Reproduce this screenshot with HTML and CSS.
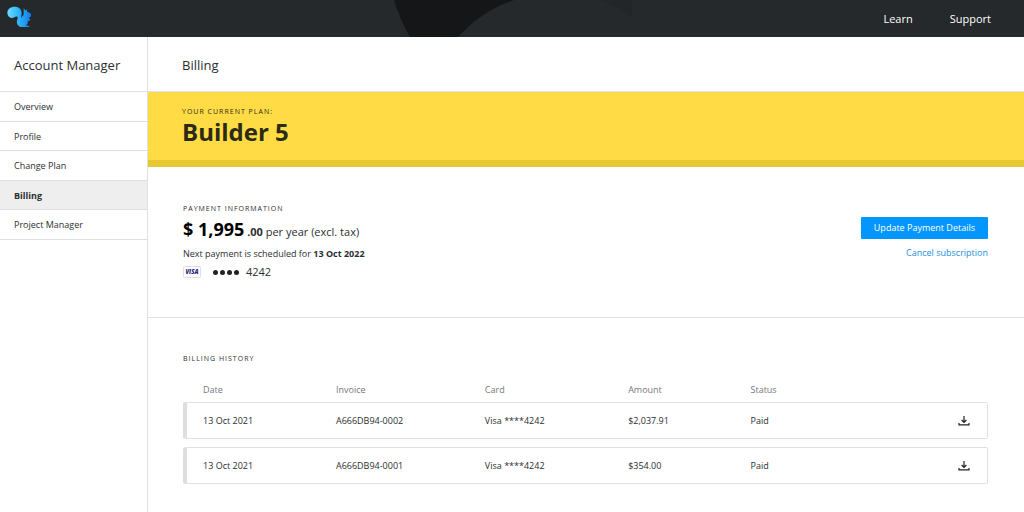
FILE: index.html
```html
<!DOCTYPE html>
<html lang="en">

<head>
    <meta charset="UTF-8">
    <meta name="viewport" content="width=device-width, initial-scale=1.0">
    <title>Billing - Account Manager</title>
    <link rel="stylesheet" href="styles.css">
</head>
<body>
    <!-- top bar -->
    <header class="topbar">
        <svg class="topbar-bg" viewBox="0 0 1024 37" preserveAspectRatio="none" aria-hidden="true">
            <path d="M394 0 H514 Q481 11 458 37 H410 Q401 22 394 0Z" fill="#141618"/>
            <path d="M600 0 Q620 8 632 18 V0 Z" fill="#222628"/>
        </svg>
        <a class="logo" href="#" aria-label="Home">
            <svg viewBox="0 0 72 63" width="24" height="21">
                <defs>
                    <linearGradient id="logo-fill" x1="0" y1="0" x2="1" y2="0">
                        <stop offset="0" stop-color="#6adcff"/>
                        <stop offset="0.5" stop-color="#2bb2fb"/>
                        <stop offset="1" stop-color="#127ce8"/>
                    </linearGradient>
                </defs>
                <path d="M1 21C1 8 12 2 23 2C36 2 44 10 44 22C44 28 42 32 42 37C44 32 48 29 50 26V7L56 14L59 9L61 18C68 18 74 24 72 30C71 34 66 35 64 36L70 40L68 45L62 44C64 52 60 56 56 58L67 60V63H46C34 63 28 54 30 44C31 39 34 35 31 32C28 30 25 32 22 34C14 39 2 34 1 21Z" fill="url(#logo-fill)"/>
            </svg>
        </a>
        <nav class="topbar-nav">
            <a href="#">Learn</a>
            <a href="#">Support</a>
        </nav>
    </header>

    <div class="layout">
        <!-- left menu -->
        <aside class="sidebar">
            <h2 class="sidebar-title">Account Manager</h2>
            <ul class="menu">
                <li><a href="#">Overview</a></li>
                <li><a href="#">Profile</a></li>
                <li><a href="#">Change Plan</a></li>
                <li class="active"><a href="#">Billing</a></li>
                <li><a href="#">Project Manager</a></li>
            </ul>
        </aside>

        <main class="content">
            <h1 class="page-title">Billing</h1>

            <section class="plan">
                <p class="label">YOUR CURRENT PLAN:</p>
                <p class="plan-name">Builder 5</p>
            </section>

            <section class="payment">
                <div class="payment-info">
                    <h3 class="label">PAYMENT INFORMATION</h3>
                    <p class="price"><strong>$ 1,995</strong> <b>.00</b> per year (excl. tax)</p>
                    <p class="next">Next payment is scheduled for <b>13 Oct 2022</b></p>
                    <div class="card">
                        <span class="visa">VISA</span>
                        <span class="dots"><i></i><i></i><i></i><i></i></span>
                        <span>4242</span>
                    </div>
                </div>
                <div class="payment-actions">
                    <button class="btn" type="button">Update Payment Details</button>
                    <a href="#">Cancel subscription</a>
                </div>
            </section>

            <section class="history">
                <h3 class="label">BILLING HISTORY</h3>
                <table class="history-table">
                    <colgroup>
                        <col class="col-date">
                        <col class="col-invoice">
                        <col class="col-card">
                        <col class="col-amount">
                        <col class="col-status">
                        <col>
                    </colgroup>
                    <thead>
                        <tr>
                            <th>Date</th>
                            <th>Invoice</th>
                            <th>Card</th>
                            <th>Amount</th>
                            <th>Status</th>
                            <td></td>
                        </tr>
                    </thead>
                    <tbody>
                        <tr>
                            <td>13 Oct 2021</td>
                            <td>A666DB94-0002</td>
                            <td>Visa ****4242</td>
                            <td>$2,037.91</td>
                            <td>Paid</td>
                            <td>
                                <a class="download" href="#" aria-label="Download invoice">
                                    <svg viewBox="0 0 12 12" width="12" height="12"><path d="M6 1V7M3.6 5L6 7.4L8.4 5M1 8V9.8H11V8"/></svg>
                                </a>
                            </td>
                        </tr>
                        <tr>
                            <td>13 Oct 2021</td>
                            <td>A666DB94-0001</td>
                            <td>Visa ****4242</td>
                            <td>$354.00</td>
                            <td>Paid</td>
                            <td>
                                <a class="download" href="#" aria-label="Download invoice">
                                    <svg viewBox="0 0 12 12" width="12" height="12"><path d="M6 1V7M3.6 5L6 7.4L8.4 5M1 8V9.8H11V8"/></svg>
                                </a>
                            </td>
                        </tr>
                    </tbody>
                </table>
            </section>
        </main>
    </div>
</body>
</html>
```

FILE: styles.css
```css
* {
    margin: 0;
    padding: 0;
    box-sizing: border-box;
}
body {
    min-height: 100vh;
    display: flex;
    flex-direction: column;
    font-family: "Open Sans", "Noto Sans", sans-serif;
    font-size: 9px;
    line-height: 12px;
    color: #2b2f31;
    background-color: #fff;
}
ul {
    list-style: none;
}
a {
    text-decoration: none;
}
/* top bar */
.topbar {
    position: relative;
    display: flex;
    justify-content: space-between;
    align-items: center;
    height: 37px;
    padding: 0 33px 0 7px;
    background-color: #25292b;
}
.topbar-bg {
    position: absolute;
    top: 0;
    left: 0;
    width: 100%;
    height: 100%;
}
.logo {
    position: relative;
    display: flex;
    padding-bottom: 4px;
}
.topbar-nav {
    position: relative;
    display: flex;
    gap: 37px;
    font-size: 11px;
    line-height: 16px;
}
.topbar-nav a {
    color: #fff;
}
.layout {
    flex: 1;
    display: flex;
}
/* left menu */
.sidebar {
    width: 148px;
    flex-shrink: 0;
    border-right: 1px solid #e1e1e1;
}
.sidebar-title,
.page-title {
    padding: 19px 14px 17px;
    border-bottom: 1px solid #e1e1e1;
    font-size: 13px;
    line-height: 18px;
    font-weight: normal;
}
.page-title {
    padding-left: 34px;
}
.menu {
    display: grid;
    grid-auto-rows: 1fr;
    min-height: 148px;
}
.menu li {
    display: flex;
    border-bottom: 1px solid #dfdfdf;
}
.menu a {
    flex: 1;
    padding: 9px 14px 7px;
    color: inherit;
}
.menu .active {
    background-color: #eee;
    font-weight: bold;
}
.content {
    flex: 1;
}
.label {
    font-size: 7px;
    line-height: 10px;
    font-weight: normal;
    letter-spacing: 1px;
}
.plan {
    padding: 15px 34px 13px;
    border-bottom: 7px solid #e8c832;
    background-color: #ffdc46;
    color: #2c2a17;
}
.plan-name {
    font-size: 24px;
    line-height: 30px;
    font-weight: bold;
}
/* payment information */
.payment {
    display: flex;
    justify-content: space-between;
    padding: 37px 36px 37px 35px;
    border-bottom: 1px solid #e1e1e1;
}
.price {
    margin-top: 2px;
    font-size: 11px;
    line-height: 26px;
}
.price strong {
    font-size: 18px;
    color: #000;
}
.next {
    margin-top: 3px;
}
.card {
    display: flex;
    align-items: center;
    margin-top: 4px;
    font-size: 11px;
    line-height: 16px;
}
.visa {
    width: 18px;
    margin-right: 12px;
    border: 1px solid #dcdfee;
    border-radius: 2px;
    font-size: 6px;
    line-height: 10px;
    font-weight: 800;
    font-style: italic;
    text-align: center;
    color: #25297c;
}
.dots {
    display: flex;
    gap: 2px;
    margin-right: 7px;
}
.dots i {
    width: 5px;
    height: 5px;
    border-radius: 50%;
    background-color: #222;
}
.payment-actions {
    display: flex;
    flex-direction: column;
    align-items: flex-end;
    gap: 8px;
    padding-top: 13px;
}
.payment-actions a {
    color: #1b8fe0;
}
.btn {
    padding: 5px 13px;
    border: none;
    border-radius: 1px;
    background-color: #0496ff;
    color: #fff;
    font: inherit;
    cursor: pointer;
}
/* billing history */
.history {
    padding: 36px 36px 20px 35px;
}
.history-table {
    width: 100%;
    margin-top: 14px;
    table-layout: fixed;
    border-collapse: separate;
    border-spacing: 0 8px;
}
.col-date {
    width: 19%;
}
.col-invoice {
    width: 18.5%;
}
.col-card {
    width: 17.8%;
}
.col-amount {
    width: 15.2%;
}
.col-status {
    width: 15%;
}
.history-table th {
    line-height: 8px;
    font-weight: normal;
    text-align: left;
    color: #74797c;
}
.history-table th:first-child {
    padding-left: 20px;
}
tbody td {
    padding: 12px 0 11px;
    border-top: 1px solid #e1e1e1;
    border-bottom: 1px solid #e1e1e1;
}
tbody td:first-child {
    padding-left: 16px;
    border-left: 4px solid #dedede;
    border-radius: 2px 0 0 2px;
}
tbody td:last-child {
    padding-right: 17px;
    border-right: 1px solid #e1e1e1;
    border-radius: 0 2px 2px 0;
}
.download {
    display: flex;
    justify-content: flex-end;
}
.download path {
    fill: none;
    stroke: #222;
    stroke-width: 1.2;
}
```
